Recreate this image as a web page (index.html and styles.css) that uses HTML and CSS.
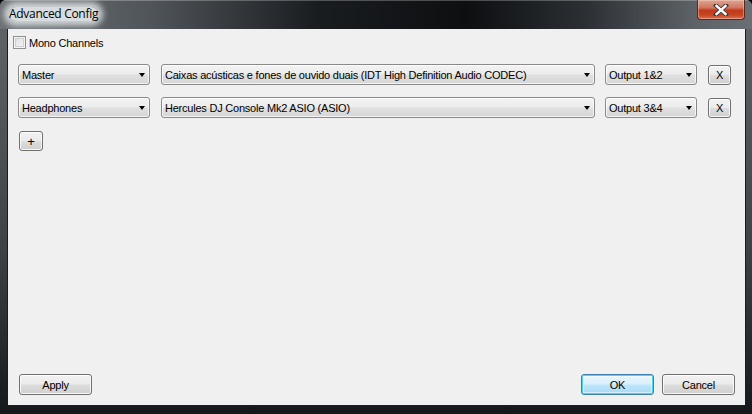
FILE: index.html
```html
<!DOCTYPE html>
<html>
<head>
<meta charset="utf-8">
<link rel="stylesheet" href="styles.css">
</head>
<body>
<div class="window">
  <div class="titlebar">
    <span class="title">Advanced Config</span>
    <div class="close">
      <svg width="16" height="12" viewBox="0 0 16 12">
        <path d="M3 1.5 L13 10.5 M13 1.5 L3 10.5" stroke="#3a3a3a" stroke-width="4.2" stroke-linecap="square"/>
        <path d="M3.5 2 L12.5 10 M12.5 2 L3.5 10" stroke="#ffffff" stroke-width="2.4" stroke-linecap="square"/>
      </svg>
    </div>
  </div>
  <div class="middle">
    <div class="frame-left"></div>
    <div class="client">
      <label class="mono"><span class="check"></span><span>Mono Channels</span></label>
      <div class="rows">
        <div class="row">
          <div class="combo w-ch"><span>Master</span><i class="arrow"></i></div>
          <div class="combo w-dev"><span>Caixas acústicas e fones de ouvido duais (IDT High Definition Audio CODEC)</span><i class="arrow"></i></div>
          <div class="combo w-out"><span>Output 1&amp;2</span><i class="arrow"></i></div>
          <div class="btn xbtn">X</div>
        </div>
        <div class="row">
          <div class="combo w-ch"><span>Headphones</span><i class="arrow"></i></div>
          <div class="combo w-dev"><span>Hercules DJ Console Mk2 ASIO (ASIO)</span><i class="arrow"></i></div>
          <div class="combo w-out"><span>Output 3&amp;4</span><i class="arrow"></i></div>
          <div class="btn xbtn">X</div>
        </div>
      </div>
      <div class="btn plus">+</div>
      <div class="spacer"></div>
      <div class="footer">
        <div class="btn dlg">Apply</div>
        <div class="grow"></div>
        <div class="btn dlg default">OK</div>
        <div class="btn dlg">Cancel</div>
      </div>
    </div>
    <div class="frame-right"></div>
  </div>
  <div class="frame-bottom"></div>
</div>
</body>
</html>
```

FILE: styles.css
```css
html, body {
  margin: 0;
  padding: 0;
  background: #000;
}
.window {
  width: 752px;
  height: 414px;
  display: flex;
  flex-direction: column;
  background: linear-gradient(to bottom, #62676b 0%, #3e4246 60%, #15181b 100%);
  box-sizing: border-box;
  border-radius: 6px 6px 0 0;
  overflow: hidden;
  font-family: "Liberation Sans", Arial, sans-serif;
  font-size: 11px;
  letter-spacing: -0.22px;
  color: #000;
}
.titlebar {
  height: 29px;
  flex: none;
  position: relative;
  background: linear-gradient(to right, #6d7276 0%, #50555a 20%, #1a1d20 42%, #0d0f11 62%, #2c3034 78%, #5c6165 92%, #6a6f73 100%);
  box-shadow: inset 0 1px 0 rgba(255,255,255,0.25);
}
.title {
  position: absolute;
  left: 9px;
  top: 7px;
  height: 14px;
  line-height: 14px;
  font-family: "Open Sans", "Liberation Sans", sans-serif;
  font-size: 12px;
  letter-spacing: -0.3px;
  color: #000;
  background: rgba(226, 230, 232, 0.92);
  border-radius: 7px;
  box-shadow: 0 0 6px 5px rgba(226, 230, 232, 0.85);
}
.close {
  position: absolute;
  left: 697px;
  top: 0;
  width: 48px;
  height: 20px;
  box-sizing: border-box;
  border: 1px solid #5a2a20;
  border-top: none;
  border-radius: 0 0 4px 4px;
  background: linear-gradient(to bottom, #dfa592 0%, #cf7760 40%, #c0391c 55%, #c8471f 80%, #d8735a 100%);
  box-shadow: inset 0 0 0 1px rgba(255,220,210,0.4);
  display: flex;
  align-items: center;
  justify-content: center;
}
.middle {
  flex: 1;
  display: flex;
  min-height: 0;
}
.frame-left { width: 8px; flex: none; }
.frame-right { width: 7px; flex: none; }
.frame-bottom { height: 9px; flex: none; }
.client {
  flex: 1;
  background: #f0f0f0;
  box-shadow: 0 0 0 1px #1a1c1e;
  display: flex;
  flex-direction: column;
  padding: 0 10px 10px 10px;
  box-sizing: border-box;
}
.mono {
  display: flex;
  align-items: center;
  gap: 3px;
  margin-top: 7px;
  margin-left: -5px;
  height: 13px;
  line-height: 12px;
}
.check {
  width: 13px;
  height: 13px;
  box-sizing: border-box;
  border: 1px solid #8e8f8f;
  background: linear-gradient(135deg, #dcdcdc 0%, #f2f2f2 80%, #ffffff 100%);
  box-shadow: inset 0 0 0 1px #f4f4f4, inset 0 0 0 2px #cfcfcf;
}
.rows {
  margin-top: 15px;
  display: flex;
  flex-direction: column;
  gap: 12px;
}
.row {
  display: flex;
  align-items: flex-start;
  height: 21px;
}
.combo {
  height: 21px;
  box-sizing: border-box;
  border: 1px solid #8a8a8a;
  border-radius: 3px;
  background: linear-gradient(to bottom, #f3f3f3 0%, #ececec 48%, #e0e0e0 52%, #d6d6d6 100%);
  box-shadow: inset 0 0 0 1px rgba(255,255,255,0.7);
  display: flex;
  align-items: center;
  padding: 0 0 0 3px;
  position: relative;
  white-space: nowrap;
}
.combo span { flex: 1; overflow: hidden; }
.arrow {
  width: 0;
  height: 0;
  border-left: 3.5px solid transparent;
  border-right: 3.5px solid transparent;
  border-top: 4px solid #000;
  margin: 1px 4px 0 4px;
}
.w-ch { width: 132px; }
.w-dev { width: 434px; margin-left: 11px; }
.w-out { width: 92px; margin-left: 10px; }
.btn {
  box-sizing: border-box;
  border: 1px solid #707070;
  border-radius: 3px;
  background: linear-gradient(to bottom, #f2f2f2 0%, #ebebeb 48%, #dddddd 52%, #cfcfcf 100%);
  box-shadow: inset 0 0 0 1px rgba(255,255,255,0.8);
  display: flex;
  align-items: center;
  justify-content: center;
}
.xbtn {
  width: 23px;
  height: 20px;
  margin-left: 11px;
  margin-top: 1px;
}
.plus {
  width: 24px;
  height: 20px;
  margin-top: 13px;
  margin-left: 1px;
  font-size: 13px;
}
.spacer { flex: 1; }
.footer {
  display: flex;
  gap: 8px;
  padding-left: 1px;
}
.grow { flex: 1; }
.dlg {
  width: 73px;
  height: 21px;
}
.default {
  border-color: #3c7fb1;
  background: linear-gradient(to bottom, #eaf6fd 0%, #d9f0fc 48%, #bee6fd 52%, #a7d9f5 100%);
  box-shadow: inset 0 0 0 1px #48d4f5, inset 0 0 0 2px rgba(255,255,255,0.5);
}
```
